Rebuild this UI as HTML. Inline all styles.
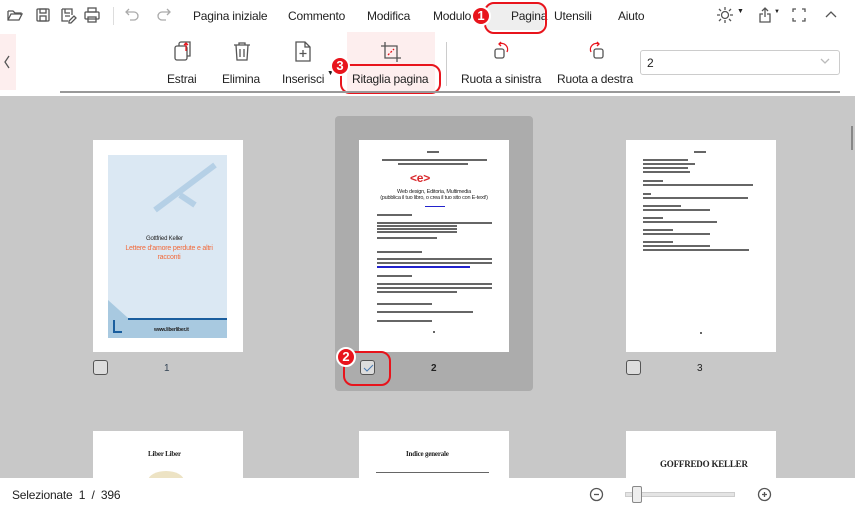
<!DOCTYPE html>
<html><head><meta charset="utf-8"><style>
*{box-sizing:border-box;margin:0;padding:0}
body{width:855px;height:513px;overflow:hidden;position:relative;background:#c8c8c8;font-family:"Liberation Sans",sans-serif;color:#222}
.a{position:absolute}
.t{font-size:12px;position:absolute;white-space:nowrap;letter-spacing:-0.2px}
.ln{position:absolute;height:2px;background:#666}
.badge{position:absolute;width:20px;height:20px;border-radius:50%;background:#e8141c;border:2px solid #fff;color:#fff;font-weight:bold;font-size:13px;text-align:center;line-height:16px}
.cb{position:absolute;width:15px;height:15px;border:1px solid #555;border-radius:3px;background:#ddd}
.num{position:absolute;font-size:10px}
svg{position:absolute;fill:none;stroke:#555;stroke-width:1.3}
</style></head><body>
<div class="a" style="left:0;top:0;width:855px;height:96px;background:#fff"></div>
<svg style="left:6px;top:6px" width="18" height="18"><path d="M2 5h5l2 2h6v2M2 5v9h11l3-6H5l-3 6"/></svg>
<svg style="left:34px;top:6px" width="18" height="18"><rect x="3" y="3" width="12" height="12" rx="1"/><rect x="6" y="3" width="6" height="4"/><rect x="6" y="10" width="6" height="5"/></svg>
<svg style="left:59px;top:6px" width="18" height="18"><path d="M3 3h10v6M3 3v12h6M6 3v4h5M6 10h5"/><path d="M10 15l5-5 2 2-5 5h-2z"/></svg>
<svg style="left:83px;top:6px" width="18" height="18"><rect x="5" y="2" width="8" height="4"/><rect x="2" y="6" width="14" height="7" rx="1"/><rect x="5" y="11" width="8" height="5"/></svg>
<div class="a" style="left:113px;top:7px;width:1px;height:18px;background:#ddd"></div>
<svg style="left:124px;top:6px;stroke:#aaa" width="18" height="18"><path d="M5 3L2 6l3 3M2 6h8a4 4 0 0 1 0 8H6"/></svg>
<svg style="left:154px;top:6px;stroke:#aaa" width="18" height="18"><path d="M13 3l3 3-3 3M16 6H8a4 4 0 0 0 0 8h4"/></svg>
<div class="t" style="left:193px;top:9px">Pagina iniziale</div>
<div class="t" style="left:288px;top:9px">Commento</div>
<div class="t" style="left:367px;top:9px">Modifica</div>
<div class="t" style="left:433px;top:9px">Modulo</div>
<div class="a" style="left:486px;top:4px;width:58px;height:26px;background:#eee;border-radius:4px"></div>
<div class="t" style="left:511px;top:9px">Pagina</div>
<div class="a" style="left:484px;top:2px;width:63px;height:32px;border:2.5px solid #e8141c;border-radius:10px"></div>
<div class="badge" style="left:471px;top:6px">1</div>
<div class="t" style="left:554px;top:9px">Utensili</div>
<div class="t" style="left:618px;top:9px">Aiuto</div>
<svg style="left:716px;top:6px" width="18" height="18"><circle cx="9" cy="9" r="3.5"/><path d="M9 1v3M9 14v3M1 9h3M14 9h3M3 3l2 2M13 13l2 2M3 15l2-2M13 5l2-2"/></svg>
<div class="t" style="left:737px;top:8px;font-size:7px">▼</div>
<svg style="left:757px;top:6px" width="18" height="18"><path d="M6 8H3v8h10V8h-3M8 11V2M5 5l3-3 3 3"/></svg>
<div class="t" style="left:774px;top:9px;font-size:6px">▼</div>
<svg style="left:791px;top:7px" width="16" height="16"><path d="M2 5V2h3M11 2h3v3M14 11v3h-3M5 14H2v-3"/></svg>
<svg style="left:823px;top:7px" width="16" height="16"><path d="M3 10l5-5 5 5"/></svg>
<div class="a" style="left:0;top:34px;width:16px;height:56px;background:#fdeeee"></div>
<svg style="left:2px;top:54px" width="10" height="16"><path d="M7 2L3 8l4 6"/></svg>
<svg style="left:172px;top:40px" width="22" height="24"><rect x="3" y="6" width="12" height="14" rx="2"/><path d="M7 6V4a2 2 0 0 1 2-2h9v14h-3"/><path d="M14 11V3M12 5l2-2 2 2" style="stroke:#e8141c"/></svg>
<svg style="left:231px;top:40px" width="22" height="24"><path d="M3 5h16M8 5V3h6v2M5 5l1 15h10l1-15M9 9v8M13 9v8"/></svg>
<svg style="left:292px;top:40px" width="22" height="24"><path d="M4 2h9l5 5v14H4zM13 2v5h5M11 10v7M7.5 13.5h7"/></svg>
<div class="t" style="left:167px;top:72px">Estrai</div>
<div class="t" style="left:222px;top:72px">Elimina</div>
<div class="t" style="left:282px;top:72px">Inserisci</div>
<div class="t" style="left:327px;top:70px;font-size:7px">▼</div>
<div class="a" style="left:347px;top:32px;width:88px;height:60px;background:#fdeeee"></div>
<svg style="left:379px;top:40px" width="24" height="24"><path d="M6 2v16h16M2 6h16v16"/><path d="M9 15l6-6" style="stroke:#e8141c;stroke-dasharray:2 1.5"/></svg>
<div class="t" style="left:352px;top:72px">Ritaglia pagina</div>
<div class="a" style="left:340px;top:64px;width:101px;height:30px;border:2.5px solid #e8141c;border-radius:10px"></div>
<div class="badge" style="left:330px;top:56px">3</div>
<div class="a" style="left:446px;top:42px;width:1px;height:44px;background:#ccc"></div>
<svg style="left:492px;top:40px" width="24" height="24"><rect x="3" y="9" width="9" height="9" rx="2"/><path d="M15 12a6 6 0 0 0-8-8M9 2L7 4l2 2" style="stroke:#e8141c"/></svg>
<svg style="left:584px;top:40px" width="24" height="24"><rect x="10" y="9" width="9" height="9" rx="2"/><path d="M7 12a6 6 0 0 1 8-8M13 2l2 2-2 2" style="stroke:#e8141c"/></svg>
<div class="t" style="left:461px;top:72px">Ruota a sinistra</div>
<div class="t" style="left:557px;top:72px">Ruota a destra</div>
<div class="a" style="left:640px;top:50px;width:200px;height:25px;border:1px solid #ccc;border-radius:3px"></div>
<div class="t" style="left:647px;top:56px">2</div>
<svg style="left:820px;top:57px;stroke:#bbb" width="10" height="8"><path d="M1 2l4 4 4-4"/></svg>
<div class="a" style="left:60px;top:91px;width:780px;height:2px;background:#999"></div>
<div class="a" style="left:851px;top:126px;width:2px;height:24px;background:#888"></div>
<div class="a" style="left:335px;top:116px;width:198px;height:275px;background:#acacac;border-radius:4px"></div>
<!-- page 1 -->
<div class="a" style="left:93px;top:140px;width:150px;height:212px;background:#fff"></div>
<div class="a" style="left:108px;top:155px;width:119px;height:183px;background:#dbe8f3"></div>
<svg style="left:150px;top:160px;stroke:#b5d0e6;stroke-width:6" width="70" height="60"><path d="M5 50L45 20L65 5M30 35l15 10"/></svg>
<div class="a" style="left:108px;top:318px;width:119px;height:20px;background:#a8c9e0"></div>
<div class="a" style="left:108px;top:300px;width:0;height:0;border-left:20px solid #a8c9e0;border-top:18px solid transparent"></div>
<div class="a" style="left:128px;top:318px;width:99px;height:2px;background:#1a5e9e"></div>
<div class="a" style="left:113px;top:320px;width:9px;height:13px;border:2px solid #1a5e9e;border-right:none;border-top:none"></div>
<div class="t" style="left:154px;top:327px;font-size:5px;font-weight:bold">www.liberliber.it</div>
<div class="t" style="left:146px;top:236px;font-size:6px">Gottfried Keller</div>
<div class="t" style="left:125px;top:244px;font-size:7px;color:#f26a3b;text-align:center;width:88px;line-height:9px;white-space:normal">Lettere d'amore perdute e altri racconti</div>
<div class="cb" style="left:93px;top:360px"></div>
<div class="num" style="left:164px;top:363px;color:#345">1</div>
<!-- page 2 -->
<div class="a" style="left:359px;top:140px;width:150px;height:212px;background:#fff"></div>
<div class="t" style="left:410px;top:171px;font-size:12px;color:#d9262a;font-weight:bold">&lt;e&gt;</div>
<div class="t" style="left:368px;top:189px;font-size:5.5px;width:132px;text-align:center;line-height:6px;white-space:normal">Web design, Editoria, Multimedia<br>(pubblica il tuo libro, o crea il tuo sito con E-text!)</div>
<div class="ln" style="left:425px;top:206px;width:20px;height:1px;background:#22c"></div>
<div class="ln" style="left:427px;top:151px;width:12px"></div>
<div class="ln" style="left:382px;top:159px;width:105px"></div>
<div class="ln" style="left:398px;top:163px;width:70px"></div>
<div class="ln" style="left:377px;top:214px;width:35px"></div>
<div class="ln" style="left:377px;top:222px;width:115px"></div>
<div class="ln" style="left:377px;top:225px;width:80px"></div>
<div class="ln" style="left:377px;top:228px;width:80px"></div>
<div class="ln" style="left:377px;top:231px;width:80px"></div>
<div class="ln" style="left:377px;top:237px;width:60px"></div>
<div class="ln" style="left:377px;top:251px;width:45px"></div>
<div class="ln" style="left:377px;top:258px;width:115px"></div>
<div class="ln" style="left:377px;top:262px;width:115px"></div>
<div class="ln" style="left:377px;top:266px;width:93px;background:#22c"></div>
<div class="ln" style="left:377px;top:275px;width:35px"></div>
<div class="ln" style="left:377px;top:283px;width:115px"></div>
<div class="ln" style="left:377px;top:287px;width:115px"></div>
<div class="ln" style="left:377px;top:291px;width:80px"></div>
<div class="ln" style="left:377px;top:303px;width:55px"></div>
<div class="ln" style="left:377px;top:311px;width:96px"></div>
<div class="ln" style="left:377px;top:320px;width:55px"></div>
<div class="ln" style="left:433px;top:331px;width:2px"></div>
<div class="cb" style="left:360px;top:360px;background:#ddd"></div>
<svg style="left:362px;top:363px;stroke:#4a7ab0;stroke-width:1" width="12" height="10"><path d="M2 5l3 3 6-6"/></svg>
<div class="a" style="left:343px;top:351px;width:48px;height:35px;border:2.5px solid #e8141c;border-radius:10px"></div>
<div class="badge" style="left:336px;top:347px">2</div>
<div class="num" style="left:431px;top:363px;font-weight:bold">2</div>
<!-- page 3 -->
<div class="a" style="left:626px;top:140px;width:150px;height:212px;background:#fff"></div>
<div class="ln" style="left:694px;top:151px;width:12px"></div>
<div class="ln" style="left:643px;top:159px;width:45px"></div>
<div class="ln" style="left:643px;top:163px;width:52px"></div>
<div class="ln" style="left:643px;top:167px;width:45px"></div>
<div class="ln" style="left:643px;top:171px;width:47px"></div>
<div class="ln" style="left:643px;top:180px;width:20px"></div>
<div class="ln" style="left:643px;top:184px;width:110px"></div>
<div class="ln" style="left:643px;top:193px;width:8px"></div>
<div class="ln" style="left:643px;top:197px;width:105px"></div>
<div class="ln" style="left:643px;top:205px;width:38px"></div>
<div class="ln" style="left:643px;top:209px;width:67px"></div>
<div class="ln" style="left:643px;top:217px;width:20px"></div>
<div class="ln" style="left:643px;top:221px;width:74px"></div>
<div class="ln" style="left:643px;top:229px;width:30px"></div>
<div class="ln" style="left:643px;top:233px;width:67px"></div>
<div class="ln" style="left:643px;top:241px;width:30px"></div>
<div class="ln" style="left:643px;top:245px;width:67px"></div>
<div class="ln" style="left:643px;top:249px;width:106px"></div>
<div class="ln" style="left:700px;top:332px;width:2px"></div>
<div class="cb" style="left:626px;top:360px"></div>
<div class="num" style="left:697px;top:363px">3</div>
<!-- row 2 -->
<div class="a" style="left:93px;top:431px;width:150px;height:50px;background:#fff"></div>
<div class="t" style="left:148px;top:450px;font-family:'Liberation Serif',serif;font-size:7px;font-weight:bold">Liber Liber</div>
<div class="a" style="left:148px;top:471px;width:36px;height:20px;border-radius:50%;background:#ede3c4"></div>
<div class="a" style="left:359px;top:431px;width:150px;height:50px;background:#fff"></div>
<div class="t" style="left:406px;top:450px;font-family:'Liberation Serif',serif;font-size:7px;font-weight:bold">Indice generale</div>
<div class="ln" style="left:376px;top:472px;width:113px;height:1px"></div>
<div class="a" style="left:626px;top:431px;width:150px;height:50px;background:#fff"></div>
<div class="t" style="left:660px;top:459px;font-family:'Liberation Serif',serif;font-size:9px;font-weight:bold">GOFFREDO KELLER</div>
<!-- bottom bar -->
<div class="a" style="left:0;top:478px;width:855px;height:35px;background:#fff"></div>
<div class="t" style="left:12px;top:488px;font-size:12px">Selezionate&nbsp;&nbsp;1&nbsp;&nbsp;/&nbsp;&nbsp;396</div>
<svg style="left:589px;top:487px" width="15" height="15"><circle cx="7.5" cy="7.5" r="6"/><path d="M5 7.5h5"/></svg>
<div class="a" style="left:625px;top:492px;width:110px;height:5px;background:#e4e4e4;border:1px solid #ccc"></div>
<div class="a" style="left:632px;top:486px;width:10px;height:17px;background:#eee;border:1px solid #888;border-radius:2px"></div>
<svg style="left:757px;top:487px" width="15" height="15"><circle cx="7.5" cy="7.5" r="6"/><path d="M5 7.5h5M7.5 5v5"/></svg>
</body></html>
